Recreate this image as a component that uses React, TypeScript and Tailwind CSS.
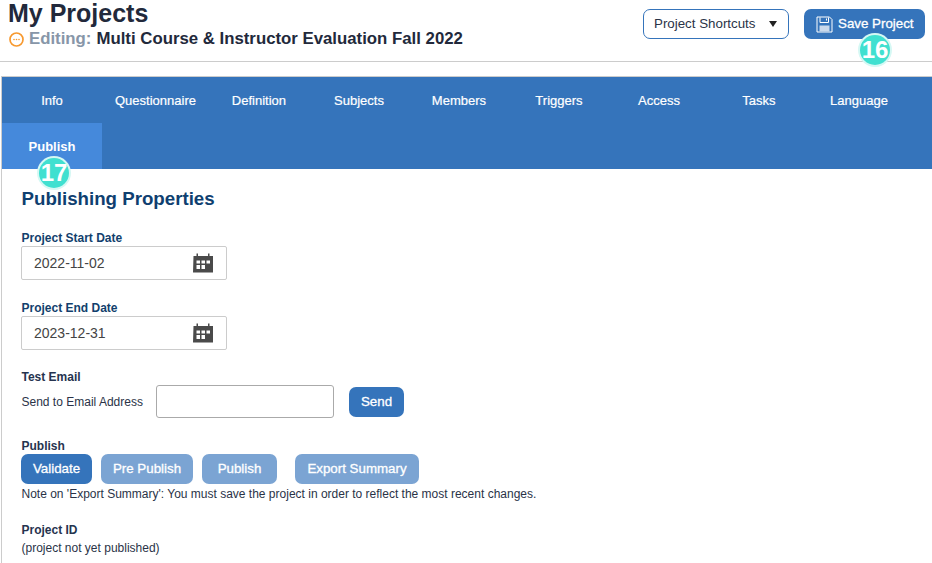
import React from "react";

const tabs = ["Info", "Questionnaire", "Definition", "Subjects", "Members", "Triggers", "Access", "Tasks", "Language"];

function Badge({ n, className }: { n: string; className: string }) {
  return (
    <div className={"absolute z-10 flex h-[30px] w-[30px] items-center justify-center rounded-full bg-[#40e0d0] text-[24px] font-bold leading-none text-white ring-2 ring-[#d5f8f4] " + className}>
      {n}
    </div>
  );
}

function CalendarIcon() {
  return (
    <svg width="21" height="20" viewBox="0 0 21 20" className="block">
      <path fill="#4a4a4a" d="M0.5 3h3V0.5h1.5V3h10V0.5h1.5V3h3.5v16.5h-20z" />
      <g fill="#fff">
        <rect x="3.5" y="7.5" width="3.5" height="3" />
        <rect x="8.5" y="7.5" width="3.5" height="3" />
        <rect x="13.5" y="7.5" width="3.5" height="3" />
        <rect x="3.5" y="12" width="3.5" height="4" />
        <rect x="8.5" y="12" width="3.5" height="4" />
      </g>
    </svg>
  );
}

function DateField({ label, value }: { label: string; value: string }) {
  return (
    <div>
      <div className="pl-[0.5px] text-[12px] font-bold leading-[14px] text-[#123f6d]">{label}</div>
      <div className="mt-[1px] flex h-[34px] w-[206px] items-center justify-between rounded-[2px] border border-[#cccccc] bg-white pl-[12px] pr-[12px]">
        <span className="text-[14px] text-[#444444]">{value}</span>
        <CalendarIcon />
      </div>
    </div>
  );
}

function ActionButton({ label, faded, className }: { label: string; faded?: boolean; className: string }) {
  return (
    <button className={"flex h-[30px] items-center justify-center rounded-[7px] text-[13.33px] font-normal text-white [-webkit-text-stroke:0.3px_#fff] " + (faded ? "bg-[#7ba4d3] " : "bg-[#3574bb] ") + className}>
      {label}
    </button>
  );
}

export default function App() {
  return (
    <div className="h-[563px] w-[932px] overflow-hidden bg-white font-['Liberation_Sans',Arial,sans-serif]">
      <header className="relative flex h-[62px] items-start justify-between border-b border-[#cccccc]">
        <div className="pl-[8px]">
          <h1 className="text-[25px] font-bold leading-[27px] text-[#22293b]">My Projects</h1>
          <div className="mt-[2px] flex items-center text-[16.8px] font-bold leading-[20px]">
            <svg width="15" height="15" viewBox="0 0 15 15" className="ml-[1px] mr-[5px] mt-[1px]">
              <circle cx="7.5" cy="7.5" r="6.5" fill="none" stroke="#f7992f" strokeWidth="1.7" />
              <circle cx="5" cy="7.5" r="0.8" fill="#f7992f" />
              <circle cx="7.5" cy="7.5" r="0.8" fill="#f7992f" />
              <circle cx="10" cy="7.5" r="0.8" fill="#f7992f" />
            </svg>
            <span className="text-[#8796a8]">Editing:</span>
            <span className="ml-[5px] text-[#22293b]">Multi Course &amp; Instructor Evaluation Fall 2022</span>
          </div>
        </div>
        <div className="flex items-start pr-[7px] pt-[9px]">
          <button className="flex h-[30px] w-[146px] items-center justify-between rounded-[7px] border border-[#3574bb] bg-white pl-[10px] pr-[11px] text-[13.33px] text-[#2a3347]">
            <span>Project Shortcuts</span>
            <span className="h-0 w-0 border-x-[4.5px] border-t-[6px] border-x-transparent border-t-[#222222]" />
          </button>
          <button className="ml-[15px] flex h-[30px] w-[121px] items-center rounded-[7px] bg-[#3574bb] pl-[12px] text-[13.33px] text-white [-webkit-text-stroke:0.3px_#fff]">
            <svg width="17" height="17" viewBox="0 0 17 17" className="mr-[5px]">
              <path fill="none" stroke="#fff" strokeWidth="1" d="M1 1h12.5l2.5 2.5V16H1z" />
              <path fill="none" stroke="#fff" strokeWidth="1" d="M4 1.5v5h8.5v-5" />
              <rect x="10" y="2.5" width="1" height="2" fill="#fff" />
              <rect x="3.5" y="9.5" width="10" height="6" fill="#c9d9ec" />
            </svg>
            Save Project
          </button>
        </div>
        <Badge n="16" className="left-[860px] top-[35px]" />
      </header>

      <main className="relative ml-[1px] mt-[14px] h-[487px] border-l-[1px] border-t-[1px] border-[#cccccc]">
        <nav className="flex flex-wrap bg-[#3574bb]">
          {tabs.map((t) => (
            <div key={t} className="flex h-[46px] min-w-[100px] items-center justify-center px-[13px] pt-[1px] text-[13px] text-white [-webkit-text-stroke:0.2px_#fff]">
              {t}
            </div>
          ))}
          <div className="flex h-[46px] w-[100px] items-center justify-center bg-[#4589db] pt-[1px] text-[13px] font-bold text-white">
            Publish
          </div>
        </nav>
        <Badge n="17" className="left-[37px] top-[81px]" />

        <section className="pl-[19px]">
          <h2 className="pl-[0.5px] pt-[18px] text-[18.7px] font-bold leading-[23px] text-[#0f3f70]">Publishing Properties</h2>
          <div className="mt-[21px]">
            <DateField label="Project Start Date" value="2022-11-02" />
          </div>
          <div className="mt-[21px]">
            <DateField label="Project End Date" value="2023-12-31" />
          </div>
          <div className="mt-[20px] pl-[0.5px] text-[12px] font-bold leading-[14px] text-[#26344f]">Test Email</div>
          <div className="mt-[1px] flex items-center">
            <span className="w-[135px] pl-[0.5px] text-[12px] text-[#2a3347]">Send to Email Address</span>
            <input className="h-[33px] w-[178px] rounded-[3px] border border-[#aaaaaa] bg-white" />
            <ActionButton label="Send" className="ml-[15px] w-[55px]" />
          </div>
          <div className="mt-[21px] pl-[0.5px] text-[12px] font-bold leading-[14px] text-[#26344f]">Publish</div>
          <div className="mt-[1px] flex">
            <ActionButton label="Validate" className="w-[71px]" />
            <ActionButton label="Pre Publish" faded className="ml-[9px] w-[92px]" />
            <ActionButton label="Publish" faded className="ml-[9px] w-[75px]" />
            <ActionButton label="Export Summary" faded className="ml-[18px] w-[124px]" />
          </div>
          <div className="mt-[3px] pl-[0.5px] text-[12px] leading-[14px] text-[#2a3347]">
            Note on 'Export Summary': You must save the project in order to reflect the most recent changes.
          </div>
          <div className="mt-[22px] pl-[0.5px] text-[12px] font-bold leading-[14px] text-[#26344f]">Project ID</div>
          <div className="mt-[4px] pl-[0.5px] text-[12px] leading-[14px] text-[#2a3347]">(project not yet published)</div>
        </section>
      </main>
    </div>
  );
}
